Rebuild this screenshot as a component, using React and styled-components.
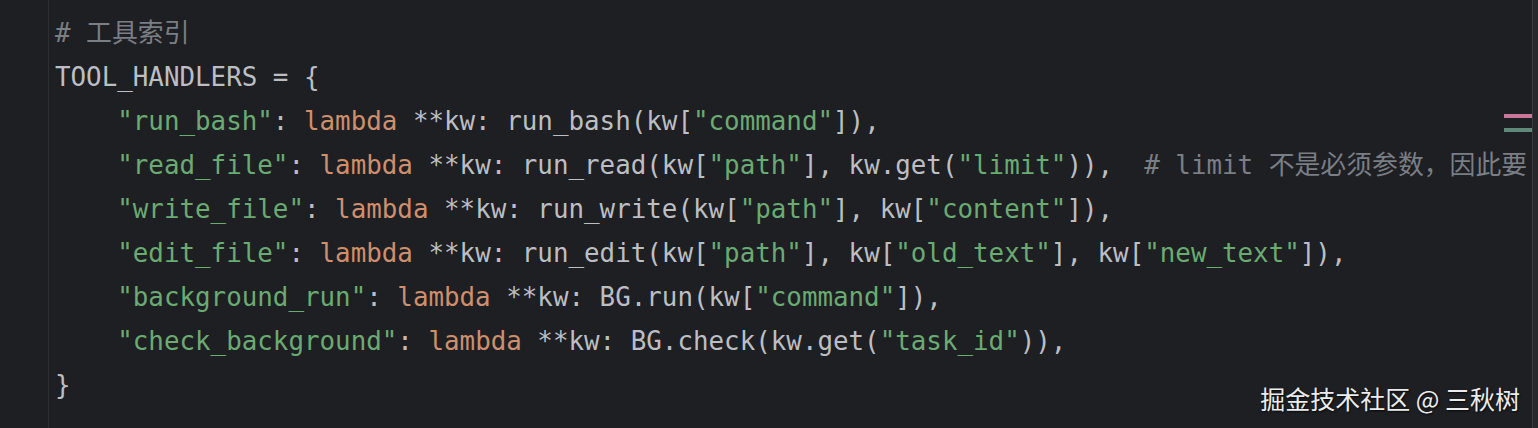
import React from "react";
import styled, { createGlobalStyle } from "styled-components";

const GlobalStyle = createGlobalStyle`
  html, body {
    margin: 0;
    padding: 0;
    background: #1e1f22;
  }
`;

const colors = {
  plain: "#bcbec4",
  str: "#6aab73",
  kw: "#cf8e6d",
  comment: "#7a7e85",
};

const Editor = styled.div`
  position: relative;
  display: flex;
  width: 1538px;
  height: 428px;
  overflow: hidden;
  background: #1e1f22;
`;

const Gutter = styled.div`
  width: 48px;
  flex-shrink: 0;
  border-right: 1px solid #2c2e32;
`;

const Code = styled.div`
  flex: 1;
  overflow: hidden;
  padding: 11px 0 0 6px;
  font-family: "DejaVu Sans Mono", "Noto Sans CJK SC", monospace;
  font-size: 25.85px;
  color: ${colors.plain};
`;

const Line = styled.div`
  height: 44px;
  line-height: 44px;
  white-space: pre;
`;

const Token = styled.span`
  color: ${(p) => colors[p.$kind] || colors.plain};
`;

const Scrollbar = styled.div`
  width: 5px;
  flex-shrink: 0;
  border-left: 1px solid #393b40;
  background: #25272a;
`;

const Marker = styled.div`
  position: absolute;
  right: 6px;
  top: ${(p) => p.$top}px;
  width: 28px;
  height: 4px;
  background: ${(p) => p.$color};
`;

const Watermark = styled.div`
  position: absolute;
  right: 18px;
  bottom: 15px;
  font-family: "Noto Sans CJK SC", "Noto Sans", sans-serif;
  font-size: 25px;
  line-height: 29px;
  color: #ececec;
  text-shadow: 1px 1px 2px rgba(0, 0, 0, 0.8);
`;

const lines = [
  [["comment", "# 工具索引"]],
  [["plain", "TOOL_HANDLERS = {"]],
  [
    ["plain", "    "],
    ["str", '"run_bash"'],
    ["plain", ": "],
    ["kw", "lambda"],
    ["plain", " **kw: run_bash(kw["],
    ["str", '"command"'],
    ["plain", "]),"],
  ],
  [
    ["plain", "    "],
    ["str", '"read_file"'],
    ["plain", ": "],
    ["kw", "lambda"],
    ["plain", " **kw: run_read(kw["],
    ["str", '"path"'],
    ["plain", "], kw.get("],
    ["str", '"limit"'],
    ["plain", ")),  "],
    ["comment", "# limit 不是必须参数，因此要"],
  ],
  [
    ["plain", "    "],
    ["str", '"write_file"'],
    ["plain", ": "],
    ["kw", "lambda"],
    ["plain", " **kw: run_write(kw["],
    ["str", '"path"'],
    ["plain", "], kw["],
    ["str", '"content"'],
    ["plain", "]),"],
  ],
  [
    ["plain", "    "],
    ["str", '"edit_file"'],
    ["plain", ": "],
    ["kw", "lambda"],
    ["plain", " **kw: run_edit(kw["],
    ["str", '"path"'],
    ["plain", "], kw["],
    ["str", '"old_text"'],
    ["plain", "], kw["],
    ["str", '"new_text"'],
    ["plain", "]),"],
  ],
  [
    ["plain", "    "],
    ["str", '"background_run"'],
    ["plain", ": "],
    ["kw", "lambda"],
    ["plain", " **kw: BG.run(kw["],
    ["str", '"command"'],
    ["plain", "]),"],
  ],
  [
    ["plain", "    "],
    ["str", '"check_background"'],
    ["plain", ": "],
    ["kw", "lambda"],
    ["plain", " **kw: BG.check(kw.get("],
    ["str", '"task_id"'],
    ["plain", ")),"],
  ],
  [["plain", "}"]],
];

export default function App() {
  return (
    <>
      <GlobalStyle />
      <Editor>
        <Gutter />
        <Code>
          {lines.map((tokens, i) => (
            <Line key={i}>
              {tokens.map(([kind, text], j) => (
                <Token key={j} $kind={kind}>
                  {text}
                </Token>
              ))}
            </Line>
          ))}
        </Code>
        <Scrollbar />
        <Marker $top={114} $color="#c7779a" />
        <Marker $top={128} $color="#5f8a7a" />
        <Watermark>掘金技术社区 @ 三秋树</Watermark>
      </Editor>
    </>
  );
}
